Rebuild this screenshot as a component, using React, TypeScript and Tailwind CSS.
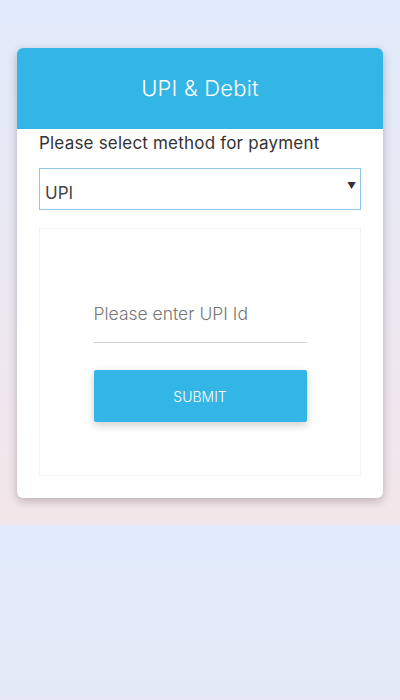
import React from "react";

export default function App() {
    return (
        <div className="w-[400px] h-[700px] font-['Inter','Liberation_Sans',sans-serif]">
            <div className="h-[525px] bg-gradient-to-b from-[#e1ebfb] to-[#f3e6e9] pt-12 px-[17px]">
                <div className="bg-white rounded-md shadow-[0_3px_10px_rgba(60,50,60,0.3)] overflow-hidden">
                    <div className="h-[81px] bg-[#33b5e5] flex items-center justify-center">
                        <h1 className="text-white text-[22px] font-light tracking-[0.2px]">UPI &amp; Debit</h1>
                    </div>
                    <div className="px-[22px] pt-[1px] pb-[22px]">
                        <p className="text-[17px] leading-[26px] text-[#333] tracking-[0.2px]">Please select method for payment</p>
                        <div className="mt-[12px] h-[42px] border border-[#8ec6e6] flex items-center justify-between pl-[5px] pr-[4px]">
                            <span className="text-[17px] text-[#444] pt-[10px]">UPI</span>
                            <span className="text-[9px] text-[#333] -mt-[6px]">▼</span>
                        </div>
                        <div className="mt-[18px] border border-dotted border-[#ececec] pt-[64px] pb-[53px] flex flex-col items-center">
                            <div className="w-[213px] h-[50px] border-b border-[#cfcfcf] pb-[6px] flex items-center">
                                <input
                                    className="w-full bg-transparent outline-none text-[17.5px] font-light text-[#555] placeholder:text-[#777]"
                                    placeholder="Please enter UPI Id"
                                />
                            </div>
                            <button className="mt-[27px] w-[213px] h-[52px] bg-[#33b5e5] text-white text-[14px] font-light rounded-[2px] shadow-[0_3px_8px_rgba(0,0,0,0.2)] uppercase">
                                Submit
                            </button>
                        </div>
                    </div>
                </div>
            </div>
            <div className="h-[175px] bg-gradient-to-b from-[#e1ebfb] to-[#e5e9f6]" />
        </div>
    );
}
